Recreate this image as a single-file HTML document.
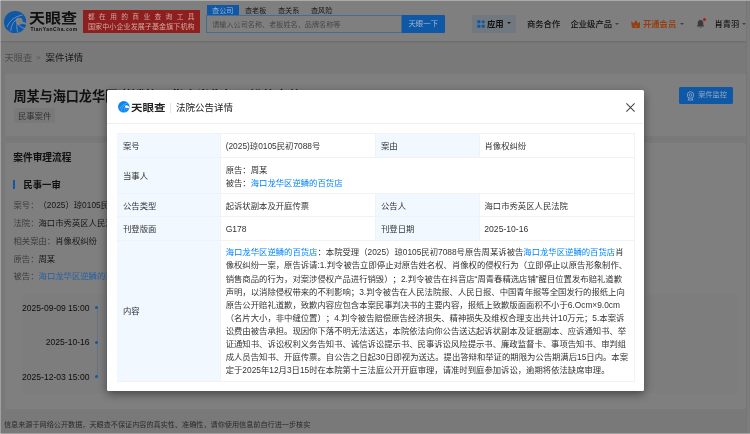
<!DOCTYPE html>
<html lang="zh-CN">
<head>
<meta charset="utf-8">
<title>案件详情 - 天眼查</title>
<style>
*{box-sizing:border-box;margin:0;padding:0}
html,body{width:750px;height:434px;overflow:hidden;background:#f3f3f3}
body{text-spacing-trim:space-all;font-family:"Liberation Sans","Noto Sans CJK SC",sans-serif;color:#333;position:relative;-webkit-font-smoothing:antialiased}
.abs{position:absolute;white-space:nowrap}
#page{will-change:transform;position:absolute;left:0;top:0;width:750px;height:434px;background:#f3f3f3;overflow:hidden}
#hdr{position:absolute;left:0;top:0;width:750px;height:40.5px;background:#fff;box-shadow:0 1px 2px rgba(0,0,0,.12)}
.card{position:absolute;background:#fff;border-radius:2px}
#over{position:absolute;left:0;top:0;width:750px;height:434px;overflow:hidden;will-change:transform}
#mask{position:absolute;left:0;top:0;width:750px;height:434px;background:rgba(0,0,0,.5)}
#modal{will-change:transform;position:absolute;left:107px;top:90px;width:536.8px;height:300.6px;background:#fff;border-radius:1.5px;box-shadow:0 3px 10px rgba(0,0,0,.45)}
.t{position:absolute;white-space:nowrap;font-size:8.35px;line-height:13px;color:#333;margin-top:1.4px}
.cell{position:absolute;border-right:1px solid #f0f2f6;border-bottom:1px solid #f0f2f6}
.tb{position:absolute;left:10px;top:43px;width:518px;height:249px;border-left:1px solid #f0f2f6;border-top:1px solid #f0f2f6}
.lab{background:#f1f8ff}
a{color:#0084ff;text-decoration:none}
</style>
</head>
<body>
<div id="page">
  <!-- header -->
  <div id="hdr">
    <!-- logo -->
    <div class="abs" style="left:29.4px;top:8.6px;font-size:13.7px;line-height:20px;font-weight:700;color:#222;transform:scaleX(1.17);transform-origin:0 0">天眼查</div>
    <div class="abs" style="left:30.4px;top:26.9px;font-size:4.95px;line-height:6px;font-weight:700;color:#1a1a1a;letter-spacing:0.55px">TianYanCha.com</div>
    <!-- red banner -->
    <!-- search -->
    <div class="abs" style="left:245px;top:5.6px;font-size:7.14px;line-height:11px;color:#333">查老板</div>
    <div class="abs" style="left:278px;top:5.6px;font-size:7.14px;line-height:11px;color:#333">查关系</div>
    <div class="abs" style="left:311px;top:5.6px;font-size:7.14px;line-height:11px;color:#333">查风险</div>
    <div class="abs" style="left:212.2px;top:16.9px;font-size:7.14px;line-height:17.5px;color:#8c8c8c">请输入公司名称、老板姓名、品牌名称等</div>
    <!-- nav -->
    <div class="abs" style="left:472px;top:14.5px;width:44px;height:18px;background:#e3f1ff;border-radius:1px"></div>
    <div class="abs" style="left:487px;top:14.5px;font-size:8.4px;line-height:18px;color:#222;font-weight:700">应用</div>
    <div class="abs" style="left:506.5px;top:22px;width:0;height:0;border-left:2px solid transparent;border-right:2px solid transparent;border-top:2.6px solid #333"></div>
    <div class="abs" style="left:527px;top:14.5px;font-size:8.3px;line-height:18px;color:#2a2a2a;font-weight:500">商务合作</div>
    <div class="abs" style="left:570.5px;top:14.9px;font-size:8.3px;line-height:18px;color:#2a2a2a;font-weight:500">企业级产品</div>
    <div class="abs" style="left:615px;top:22.8px;width:0;height:0;border-left:2.1px solid transparent;border-right:2.1px solid transparent;border-top:2.6px solid #808080;margin-left:-0.4px"></div>
    <div class="abs" style="left:680.5px;top:22.8px;width:0;height:0;border-left:2.1px solid transparent;border-right:2.1px solid transparent;border-top:2.6px solid #808080;margin-left:-0.4px"></div>
    <svg class="abs" style="left:695.5px;top:18.5px" width="9" height="10" viewBox="0 0 18 20">
      <path d="M9 2 C5 2 3.5 5 3.5 8 V12 L1.5 15 H16.5 L14.5 12 V8 C14.5 5 13 2 9 2 Z" fill="#777"/>
      <path d="M6.5 16.5 C7 18.5 11 18.5 11.5 16.5 Z" fill="#777"/>
    </svg>
    <div class="abs" style="left:714.5px;top:15.2px;font-size:8.3px;line-height:18px;color:#2a2a2a;font-weight:500">肖青羽</div>
    <div class="abs" style="left:742.5px;top:22.8px;width:0;height:0;border-left:2.1px solid transparent;border-right:2.1px solid transparent;border-top:2.6px solid #808080;margin-left:-0.4px"></div>
  </div>

  <!-- breadcrumb -->
  <div class="abs" style="left:4.5px;top:51px;font-size:9.3px;line-height:14px;color:#999">天眼查</div>
  <div class="abs" style="left:36px;top:51px;font-size:8px;line-height:14px;color:#aaa">&gt;</div>
  <div class="abs" style="left:45.5px;top:51.2px;font-size:9.45px;line-height:14px;color:#333">案件详情</div>

  <!-- card 1 -->
  <div class="card" style="left:4.5px;top:74px;width:742.5px;height:62px"></div>
  <div class="abs" style="left:13.4px;top:88.8px;font-size:13.1px;line-height:16px;font-weight:700;color:#222">周某与海口龙华区逆鳞的百货店肖像权纠纷的案件</div>
  <div class="abs" style="left:14.2px;top:107.6px;width:40.8px;height:15.6px;background:#f3f3f3;border-radius:1.5px;font-size:8.35px;line-height:17.2px;color:#666;text-align:center">民事案件</div>

  <!-- card 2 -->
  <div class="card" style="left:4.5px;top:143px;width:741px;height:266px"></div>
  <div class="abs" style="left:13.3px;top:150.5px;font-size:9.7px;line-height:14px;font-weight:700;color:#222">案件审理流程</div>
  <div class="abs" style="left:23.3px;top:177.8px;font-size:9.4px;line-height:14px;font-weight:700;color:#222">民事一审</div>
  <div class="abs" style="left:13.5px;top:199.2px;font-size:8.35px;line-height:13px;color:#7a7a7a">案号：<span style="color:#333">（2025）琼0105民初7088号</span></div>
  <div class="abs" style="left:13.5px;top:217px;font-size:8.35px;line-height:13px;color:#7a7a7a">法院：<span style="color:#333">海口市秀英区人民法院</span></div>
  <div class="abs" style="left:13.5px;top:234.8px;font-size:8.35px;line-height:13px;color:#7a7a7a">相关案由：<span style="color:#333">肖像权纠纷</span></div>
  <div class="abs" style="left:13.5px;top:252.6px;font-size:8.35px;line-height:13px;color:#7a7a7a">原告：<span style="color:#333">周某</span></div>
  <div class="abs" style="left:13.5px;top:270.4px;font-size:8.35px;line-height:13px;color:#7a7a7a">被告：</div>
  <!-- timeline -->
  <div class="abs" style="left:22px;top:294.5px;width:715px;height:98px;background:#fafafa;border-radius:1.5px"></div>
  <div class="abs" style="left:96.5px;top:308px;width:1px;height:69px;background:rgba(0,132,255,.16)"></div>
  <div class="abs" style="left:0;top:301px;width:89.5px;text-align:right;font-size:8.55px;line-height:13px;color:#1a1a1a;margin-top:0.5px">2025-09-09 15:00</div>
  <div class="abs" style="left:0;top:335.8px;width:89.5px;text-align:right;font-size:8.55px;line-height:13px;color:#1a1a1a;margin-top:0.5px">2025-10-16</div>
  <div class="abs" style="left:0;top:370.2px;width:89.5px;text-align:right;font-size:8.55px;line-height:13px;color:#1a1a1a;margin-top:0.5px">2025-12-03 15:00</div>

  <div class="abs" style="left:746.3px;top:0;width:3.7px;height:434px;background:#f9f9f9;border-left:1px solid #ececec"></div>
  <!-- footer -->
  <div class="abs" style="left:4px;top:418.5px;font-size:7.14px;line-height:12px;color:#555">信息来源于网络公开数据，天眼查不保证内容的真实性、准确性，请你使用信息前自行进一步核实</div>
</div>

<div id="mask"></div>

<!-- saturated elements drawn above the dimming mask -->
<div id="over">
    <svg class="abs" style="left:3.9px;top:10.6px" width="22.4" height="22.4" viewBox="0 0 46 46">
      <circle cx="23" cy="23" r="23" fill="#0f58a5"/>
      <circle cx="31.3" cy="21.2" r="7.1" fill="#7f7f7f"/>
      <path d="M37 21.5 C40 22 43.5 23.5 46 25.5 L45.2 28.6 C42.5 27 39.5 26.4 36.5 27 Z" fill="#7f7f7f"/>
      <path d="M6.5 33 C11 20 22 11 38 8.5" stroke="#8fa6c0" stroke-opacity=".75" stroke-width="1.9" fill="none"/>
      <path d="M14 41.5 C14.5 30 19.5 21 28 16" stroke="#8fa6c0" stroke-opacity=".75" stroke-width="1.9" fill="none"/>
      <path d="M27.5 25 C25 31 26.5 39 29 45" stroke="#8fa6c0" stroke-opacity=".75" stroke-width="1.9" fill="none"/>
      <path d="M29 27 C32 32 37 35 42.5 35.5" stroke="#8fa6c0" stroke-opacity=".75" stroke-width="1.9" fill="none"/>
    </svg>
    <div class="abs" style="left:83px;top:10px;width:117px;height:22.5px;background:#8e1f1f"></div>
    <div class="abs" style="left:88px;top:11.8px;font-size:6.7px;line-height:9px;color:#d2a7a2;letter-spacing:4.4px">都在用的商业查询工具</div>
    <div class="abs" style="left:88px;top:21.5px;font-size:7.05px;line-height:9px;color:#d2a7a2;letter-spacing:0.06px">国家中小企业发展子基金旗下机构</div>
    <div class="abs" style="left:206.3px;top:15.2px;width:196px;height:17.8px;border:1px solid rgba(15,88,165,.5)"></div>
    <div class="abs" style="left:206.7px;top:4.7px;width:32.2px;height:10.8px;background:#0f58a5;color:#9fb5d2;font-size:7.14px;line-height:12.6px;text-align:center">查公司</div>
    <div class="abs" style="left:402px;top:15px;width:42.5px;height:17.5px;background:#0f58a5;border-radius:0 1px 1px 0;color:#9fb5d2;font-size:7.4px;line-height:17.5px;text-align:center">天眼一下</div>
    <svg class="abs" style="left:477px;top:20px" width="8" height="8" viewBox="0 0 16 16">
      <rect x="0.5" y="0.5" width="6.2" height="6.2" rx="1" fill="#0f58a5"/>
      <rect x="9.3" y="9.3" width="6.2" height="6.2" rx="1" fill="#0f58a5"/>
      <rect x="0.5" y="9.3" width="6.2" height="6.2" rx="1" fill="#0f58a5"/>
      <circle cx="12.4" cy="3.6" r="3.2" fill="#0f58a5"/>
    </svg>
    <svg class="abs" style="left:630.7px;top:19.6px" width="9.8" height="8.7" viewBox="0 0 18 16">
      <path d="M0.8 3.2 L5 7 L9 0.8 L13 7 L17.2 3.2 L15.4 15 L2.6 15 Z" fill="#963e10" stroke="#963e10" stroke-width="1" stroke-linejoin="round"/>
      <path d="M6.4 10.2 L9 12.6 L11.6 10.2" fill="none" stroke="#7f7f7f" stroke-width="1.5"/>
    </svg>
    <div class="abs" style="left:643px;top:15.3px;font-size:8.3px;line-height:18px;color:#963e10;font-weight:700">开通会员</div>
    <div class="abs" style="left:703px;top:17.5px;width:3px;height:3px;border-radius:50%;background:#b01818"></div>
  <div class="abs" style="left:679.2px;top:87px;width:54px;height:17px;background:#0f58a5;border-radius:1.5px"></div>
  <svg class="abs" style="left:686px;top:91px" width="9" height="10" viewBox="0 0 18 20">
    <circle cx="9" cy="8" r="6.5" fill="none" stroke="#93abc9" stroke-width="1.6"/>
    <circle cx="9" cy="8" r="2.6" fill="none" stroke="#93abc9" stroke-width="1.5"/>
    <path d="M3.5 18 H14.5 M6 14 L5 18 M12 14 L13 18" stroke="#93abc9" stroke-width="1.6" fill="none"/>
  </svg>
  <div class="abs" style="left:698.3px;top:87px;font-size:7.14px;line-height:17px;color:#93abc9">案件监控</div>
  <div class="abs" style="left:13.3px;top:180px;width:1.8px;height:9px;background:#0f58a5"></div>
  <div class="abs" style="left:95.3px;top:306.2px;width:3px;height:3px;border-radius:50%;background:#0f58a5"></div>
  <div class="abs" style="left:95.3px;top:341px;width:3px;height:3px;border-radius:50%;background:#0f58a5"></div>
  <div class="abs" style="left:95.3px;top:375.4px;width:3px;height:3px;border-radius:50%;background:#0f58a5"></div>
  <div class="abs" style="left:38.55px;top:270.4px;font-size:8.35px;line-height:13px;color:#2a60a4">海口龙华区逆鳞的百货店</div>
</div>

<!-- modal -->
<div id="modal">
  <svg class="abs" style="left:11.2px;top:11.2px" width="11.6" height="11.6" viewBox="0 0 46 46">
      <circle cx="23" cy="23" r="23" fill="#0a84f0"/>
      <circle cx="33.5" cy="22" r="5.6" fill="#fff"/>
      <path d="M36 20 C40 19.5 43 21 46 23.5 C45.5 26 45 27.5 44 29.5 C41 26.5 38.5 26 35 27 Z" fill="#fff"/>
      <path d="M6.5 33 C11 20 22 11 38 8.5" stroke="#fff" stroke-opacity=".7" stroke-width="1.5" fill="none"/>
      <path d="M14 41.5 C14.5 30 19.5 21 28 16" stroke="#fff" stroke-opacity=".7" stroke-width="1.5" fill="none"/>
      <path d="M27.5 25 C25 31 26.5 39 29 45" stroke="#fff" stroke-opacity=".7" stroke-width="1.5" fill="none"/>
      <path d="M29 27 C32 32 37 35 42.5 35.5" stroke="#fff" stroke-opacity=".7" stroke-width="1.5" fill="none"/>
    </svg>
  <div class="abs" style="left:24.3px;top:9.9px;font-size:9.6px;line-height:16px;font-weight:700;color:#222;transform:scaleX(1.2);transform-origin:0 0">天眼查</div>
  <div class="abs" style="left:62.8px;top:12.5px;width:1px;height:10px;background:#e4e4e4"></div>
  <div class="abs" style="left:69px;top:9.5px;font-size:9.52px;line-height:16px;color:#222">法院公告详情</div>
  <svg class="abs" style="left:518.8px;top:12.5px" width="9" height="9" viewBox="0 0 9 9">
    <path d="M0.4 0.4 L8.6 8.6 M8.6 0.4 L0.4 8.6" stroke="#444" stroke-width="1.05" fill="none"/>
  </svg>
  <div class="abs" style="left:0;top:33px;width:536px;height:0.6px;background:#eee"></div>

  <!-- table (coordinates relative to modal: table left 10.4, top 43.4) -->
  <div class="tb"></div>
  <div class="cell lab" style="left:10px;top:44px;width:104px;height:24px"></div>
  <div class="cell" style="left:114px;top:44px;width:154.5px;height:24px"></div>
  <div class="cell lab" style="left:268.5px;top:44px;width:104px;height:24px"></div>
  <div class="cell" style="left:372.5px;top:44px;width:155.5px;height:24px"></div>
  <div class="cell lab" style="left:10px;top:68px;width:104px;height:36px"></div>
  <div class="cell" style="left:114px;top:68px;width:414px;height:36px"></div>
  <div class="cell lab" style="left:10px;top:104px;width:104px;height:23px"></div>
  <div class="cell" style="left:114px;top:104px;width:154.5px;height:23px"></div>
  <div class="cell lab" style="left:268.5px;top:104px;width:104px;height:23px"></div>
  <div class="cell" style="left:372.5px;top:104px;width:155.5px;height:23px"></div>
  <div class="cell lab" style="left:10px;top:127px;width:104px;height:24px"></div>
  <div class="cell" style="left:114px;top:127px;width:154.5px;height:24px"></div>
  <div class="cell lab" style="left:268.5px;top:127px;width:104px;height:24px"></div>
  <div class="cell" style="left:372.5px;top:127px;width:155.5px;height:24px"></div>
  <div class="cell lab" style="left:10px;top:151px;width:104px;height:141px"></div>
  <div class="cell" style="left:114px;top:151px;width:414px;height:141px"></div>

  <div class="t" style="left:16px;top:48.8px">案号</div>
  <div class="t" style="left:118.7px;top:48.8px">(2025)琼0105民初7088号</div>
  <div class="t" style="left:274px;top:48.8px">案由</div>
  <div class="t" style="left:377.5px;top:48.8px">肖像权纠纷</div>

  <div class="t" style="left:16px;top:79px">当事人</div>
  <div class="t" style="left:118.7px;top:72.5px">原告：周某</div>
  <div class="t" style="left:118.7px;top:85.5px">被告：<a>海口龙华区逆鳞的百货店</a></div>

  <div class="t" style="left:16px;top:108.6px">公告类型</div>
  <div class="t" style="left:118.7px;top:108.6px">起诉状副本及开庭传票</div>
  <div class="t" style="left:274px;top:108.6px">公告人</div>
  <div class="t" style="left:377.5px;top:108.6px">海口市秀英区人民法院</div>

  <div class="t" style="left:16px;top:132px">刊登版面</div>
  <div class="t" style="left:118.7px;top:132px;font-size:8.55px">G178</div>
  <div class="t" style="left:274px;top:132px">刊登日期</div>
  <div class="t" style="left:377.3px;top:132px;font-size:8.6px">2025-10-16</div>

  <div class="t" style="left:16px;top:214px">内容</div>
  <div class="t" id="content" style="left:118.7px;top:155px;line-height:13.06px"><a>海口龙华区逆鳞的百货店</a>：本院受理（2025）琼0105民初7088号原告周某诉被告<a>海口龙华区逆鳞的百货店</a>肖<br>像权纠纷一案，原告诉请:1.判令被告立即停止对原告姓名权、肖像权的侵权行为（立即停止以原告形象制作、<br>销售商品的行为，对案涉侵权产品进行销毁）；2.判令被告在抖音店“周青春精选店铺”醒目位置发布赔礼道歉<br>声明，以消除侵权带来的不利影响；3.判令被告在人民法院报、人民日报、中国青年报等全国发行的报纸上向<br>原告公开赔礼道歉，致歉内容应包含本案民事判决书的主要内容，报纸上致歉版面面积不小于6.Ocm×9.0cm<br>（名片大小，非中缝位置）；4.判令被告赔偿原告经济损失、精神损失及维权合理支出共计10万元；5.本案诉<br>讼费由被告承担。现因你下落不明无法送达，本院依法向你公告送达起诉状副本及证据副本、应诉通知书、举<br>证通知书、诉讼权利义务告知书、诚信诉讼提示书、民事诉讼风险提示书、廉政监督卡、事项告知书、审判组<br>成人员告知书、开庭传票。自公告之日起30日即视为送达。提出答辩和举证的期限为公告期满后15日内。本案<br>定于2025年12月3日15时在本院第十三法庭公开开庭审理，请准时到庭参加诉讼，逾期将依法缺席审理。</div>
</div>

<!-- screenshot edge strips -->
<div class="abs" style="left:0;top:0;width:750px;height:1px;background:rgba(255,255,255,.35)"></div>
<div class="abs" style="left:0;top:0;width:1px;height:434px;background:rgba(255,255,255,.3)"></div>
<div class="abs" style="left:0;top:432.6px;width:750px;height:1.4px;background:rgba(255,255,255,.3)"></div>
</body>
</html>
